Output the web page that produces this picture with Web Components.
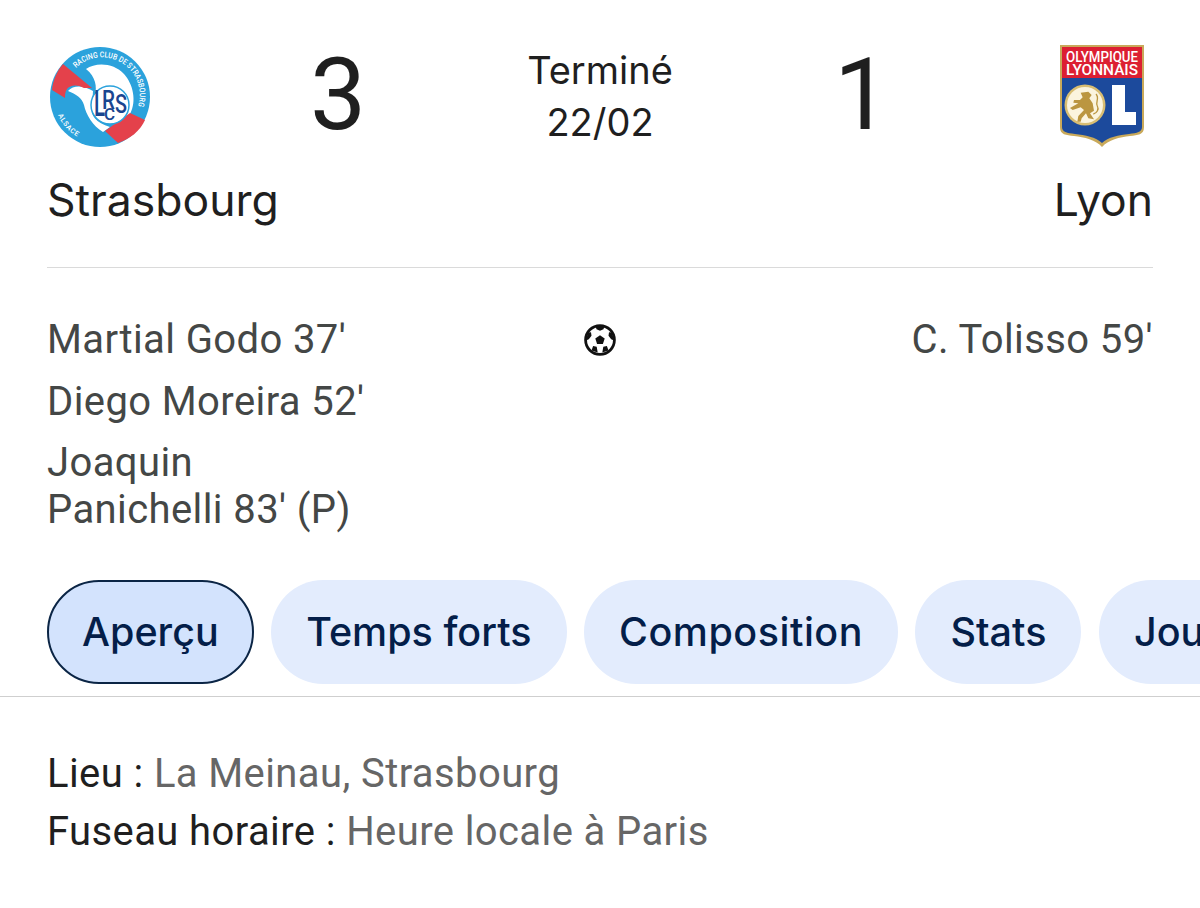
<!DOCTYPE html>
<html lang="fr">
<head>
<meta charset="utf-8">
<title>Strasbourg - Lyon</title>
<style>
  html, body { margin: 0; background: #fff; }
  body { width: 1200px; height: 908px; overflow: hidden; font-family: Roboto, "Liberation Sans", sans-serif; }
</style>
</head>
<body>
<match-card>
  <match-header>
    <team-block slot="home" name="Strasbourg"><rcs-logo></rcs-logo></team-block>
    <score-value slot="home-score">3</score-value>
    <match-status slot="status"><span>Terminé</span><span>22/02</span></match-status>
    <score-value slot="away-score">1</score-value>
    <team-block slot="away" name="Lyon" right><ol-logo></ol-logo></team-block>
  </match-header>
  <goal-list>
    <span slot="home">Martial Godo 37'</span>
    <span slot="home">Diego Moreira 52'</span>
    <span slot="home">Joaquin Panichelli 83' (P)</span>
    <ball-icon slot="icon"></ball-icon>
    <span slot="away">C. Tolisso 59'</span>
  </goal-list>
  <tab-bar>
    <tab-chip active>Aperçu</tab-chip>
    <tab-chip>Temps forts</tab-chip>
    <tab-chip style="letter-spacing: .5px">Composition</tab-chip>
    <tab-chip>Stats</tab-chip>
    <tab-chip>Joueurs</tab-chip>
  </tab-bar>
  <match-info>
    <info-line label="Lieu :">La Meinau, Strasbourg</info-line>
    <info-line label="Fuseau horaire :">Heure locale à Paris</info-line>
  </match-info>
</match-card>

<script>
// small helper so each element only has to give its html
class ShadowEl extends HTMLElement {
  constructor() {
    super();
    this.attachShadow({ mode: "open" });
  }
  connectedCallback() {
    this.shadowRoot.innerHTML = this.render();
  }
}

customElements.define("match-card", class extends ShadowEl {
  render() {
    return `<style>:host { display: block; }</style><slot></slot>`;
  }
});

customElements.define("match-header", class extends ShadowEl {
  render() {
    return `
    <style>
      :host {
        display: grid;
        grid-template-columns: 230px 122px 1fr 122px 230px;
        margin: 0 47px;
        height: 267px;
        border-bottom: 1px solid #dadada;
      }
      .mid { display: flex; justify-content: center; padding-top: 39px; }
    </style>
    <slot name="home"></slot>
    <div class="mid"><slot name="home-score"></slot></div>
    <div class="mid"><slot name="status"></slot></div>
    <div class="mid"><slot name="away-score"></slot></div>
    <slot name="away"></slot>`;
  }
});

customElements.define("team-block", class extends ShadowEl {
  render() {
    return `
    <style>
      :host { display: flex; flex-direction: column; padding-top: 45px; }
      :host([right]) { align-items: flex-end; }
      .name {
        margin-top: 19px;
        font-family: Inter, Roboto, sans-serif;
        font-size: 44.5px;
        line-height: 64px;
        color: #1f1f1f;
        white-space: nowrap;
      }
    </style>
    <slot></slot>
    <div class="name">${this.getAttribute("name")}</div>`;
  }
});

customElements.define("score-value", class extends ShadowEl {
  render() {
    return `
    <style>
      :host { display: block; font-size: 100px; line-height: 112px; color: #1f1f1f; }
    </style>
    <slot></slot>`;
  }
});

customElements.define("match-status", class extends ShadowEl {
  render() {
    return `
    <style>
      :host {
        display: flex;
        flex-direction: column;
        align-items: center;
        font-family: Inter, Roboto, sans-serif;
        font-size: 38px;
        line-height: 52px;
        color: #1f1f1f;
        padding-top: 5px;
      }
    </style>
    <slot></slot>`;
  }
});

customElements.define("goal-list", class extends ShadowEl {
  render() {
    return `
    <style>
      :host {
        display: grid;
        grid-template-columns: 320px 1fr 320px;
        margin: 0 47px;
        padding-top: 49px;
        height: 312px;
        box-sizing: border-box;
        font-size: 40px;
        letter-spacing: .4px;
        line-height: 46.5px;
        color: #444746;
      }
      .col { display: flex; flex-direction: column; gap: 15px; }
      .away { align-items: flex-end; }
      .icon { display: flex; justify-content: center; }
      ::slotted(span) { display: block; }
    </style>
    <div class="col"><slot name="home"></slot></div>
    <div class="icon"><slot name="icon"></slot></div>
    <div class="col away"><slot name="away"></slot></div>`;
  }
});

customElements.define("tab-bar", class extends ShadowEl {
  render() {
    return `
    <style>
      :host {
        display: flex;
        gap: 17.5px;
        padding: 0 0 12px 47px;
        overflow: hidden;
        border-bottom: 1px solid #cfcfcf;
      }
    </style>
    <slot></slot>`;
  }
});

customElements.define("tab-chip", class extends ShadowEl {
  render() {
    return `
    <style>
      :host {
        display: flex;
        flex: none;
        align-items: center;
        height: 104px;
        box-sizing: border-box;
        padding: 0 35px;
        border-radius: 52px;
        background: #e3ecfd;
        color: #041e49;
        font-family: Inter, Roboto, sans-serif;
        font-weight: 500;
        font-size: 39.5px;
      }
      :host([active]) {
        background: #d3e3fd;
        border: 2px solid #0b2545;
        padding: 0 33px;
      }
    </style>
    <slot></slot>`;
  }
});

customElements.define("match-info", class extends ShadowEl {
  render() {
    return `
    <style>
      :host { display: block; padding: 48px 47px 0; font-size: 40px; letter-spacing: .4px; line-height: 58px; }
    </style>
    <slot></slot>`;
  }
});

customElements.define("info-line", class extends ShadowEl {
  render() {
    return `
    <style>
      :host { display: block; color: #666; white-space: nowrap; }
      b { font-weight: 400; color: #1f1f1f; }
    </style>
    <b>${this.getAttribute("label")}</b> <slot></slot>`;
  }
});

customElements.define("ball-icon", class extends ShadowEl {
  render() {
    return `
    <style>:host { display: block; width: 32px; height: 32px; margin-top: 3px; }</style>
    <svg viewBox="0 0 32 32" width="32" height="32">
      <circle cx="16" cy="16" r="14.4" fill="#fff" stroke="#111" stroke-width="2.8"/>
      <path fill="#111" d="M16 11.2l4.700 3.400-1.800 5.500h-5.800l-1.800-5.500z"/>
      <path fill="#111" d="M11.500 2h9l-1 3.200L16 6.800l-3.500-1.600zM28 8.500l2 8-2.800-1.200-2.700-3.600.5-3.400zM4 8.500l-2 8 2.800-1.200 2.700-3.600-.5-3.400zM7.500 26.500l1.600-4.600 3.600.8 1 5.800zM24.500 26.500l-1.600-4.600-3.600.8-1 5.800z"/>
    </svg>`;
  }
});

customElements.define("rcs-logo", class extends ShadowEl {
  render() {
    return `
    <style>:host { display: block; width: 104px; height: 104px; margin-left: 1px; }</style>
    <svg viewBox="-2 -2 104 104" width="104" height="104" font-family="Roboto, sans-serif">
      <defs>
        <path id="top" d="M26 21 A37.500 37.500 0 0 1 85 66"/>
        <path id="bot" d="M8 68 A46 46 0 0 0 34 93"/>
      </defs>
      <circle cx="50" cy="50" r="50" fill="#2ba2dc"/>
      <path fill="#fff" d="M36 22C46 15 64 16 74 27 83 37 87 54 80 67L65 75 45 48C47 40 46 30 36 22Z"/>
      <path fill="#fff" d="M18 44C24 37 35 39 43 44L42 60C40 68 46 76 60 80L53 85C43 79 36 68 34 58 32 51 26 47 18 44Z"/>
      <path fill="#e4414b" d="M13 17 42 41 34 41C27 37 20 38 17 42 15 45 15 48 15 51L2 43C3 33 7 24 13 17Z"/>
      <path fill="#e4414b" d="M55 84 80 66 95 73C90 84 80 92 68 96Z"/>
      <circle cx="60" cy="58" r="19" fill="#fff" stroke="#2ba2dc" stroke-width="1.500"/>
      <text x="44" y="69" font-size="36" font-weight="500" fill="#1a4690" textLength="11" lengthAdjust="spacingAndGlyphs">L</text>
      <text x="52" y="62" font-size="25" font-weight="500" fill="#1a4690" textLength="13" lengthAdjust="spacingAndGlyphs">R</text>
      <text x="65" y="66" font-size="25" font-weight="500" fill="#1a4690" textLength="12" lengthAdjust="spacingAndGlyphs">S</text>
      <text x="54" y="73" font-size="17" font-weight="500" fill="#1a4690">C</text>
      <text font-size="8" font-weight="500" fill="#fff"><textPath href="#top" textLength="99" lengthAdjust="spacingAndGlyphs">RACING CLUB DE STRASBOURG</textPath></text>
      <text font-size="7" font-weight="500" fill="#fff" letter-spacing=".7"><textPath href="#bot">ALSACE</textPath></text>
    </svg>`;
  }
});

customElements.define("ol-logo", class extends ShadowEl {
  render() {
    return `
    <style>:host { display: block; width: 84px; height: 104px; margin-right: 9px; }</style>
    <svg viewBox="0 0 84 104" width="84" height="104" font-family="Roboto, sans-serif">
      <path fill="#c9a95a" d="M0 0H84V82C84 90 78 90 70 91 60 92 48 95 42 102 36 95 24 92 14 91 6 90 0 90 0 82Z"/>
      <path fill="#1c4a9c" d="M2 33H82V82C82 87 77 88 69 89 59 90 48 92 42 98 36 92 25 90 15 89 7 88 2 87 2 82Z"/>
      <rect x="2" y="2" width="80" height="31" fill="#dc1f32"/>
      <text x="42" y="17" text-anchor="middle" font-size="14.5" font-weight="500" fill="#fff" textLength="72" lengthAdjust="spacingAndGlyphs">OLYMPIQUE</text>
      <text x="42" y="30" text-anchor="middle" font-size="14.5" font-weight="500" fill="#fff" textLength="72" lengthAdjust="spacingAndGlyphs">LYONNAIS</text>
      <circle cx="25" cy="60" r="20.500" fill="#d8bd72"/>
      <circle cx="25" cy="60" r="18" fill="#fbf4de"/>
      <g transform="translate(0 35) scale(.3333)">
        <path fill="#bb9640" d="M62 38 85 35 95 45 88 55 98 70 102 92 90 100 102 118 85 115 78 100 65 115 62 125 52 125 55 108 72 90 62 82 38 90 30 84 55 70 40 68 42 60 60 60 68 52Z"/>
        <path fill="none" stroke="#bb9640" stroke-width="4" d="M108 42C120 55 105 65 112 78 118 88 110 100 100 102"/>
      </g>
      <path fill="#fff" d="M52 40H65V67H76V80H52Z"/>
    </svg>`;
  }
});
</script>
</body>
</html>
